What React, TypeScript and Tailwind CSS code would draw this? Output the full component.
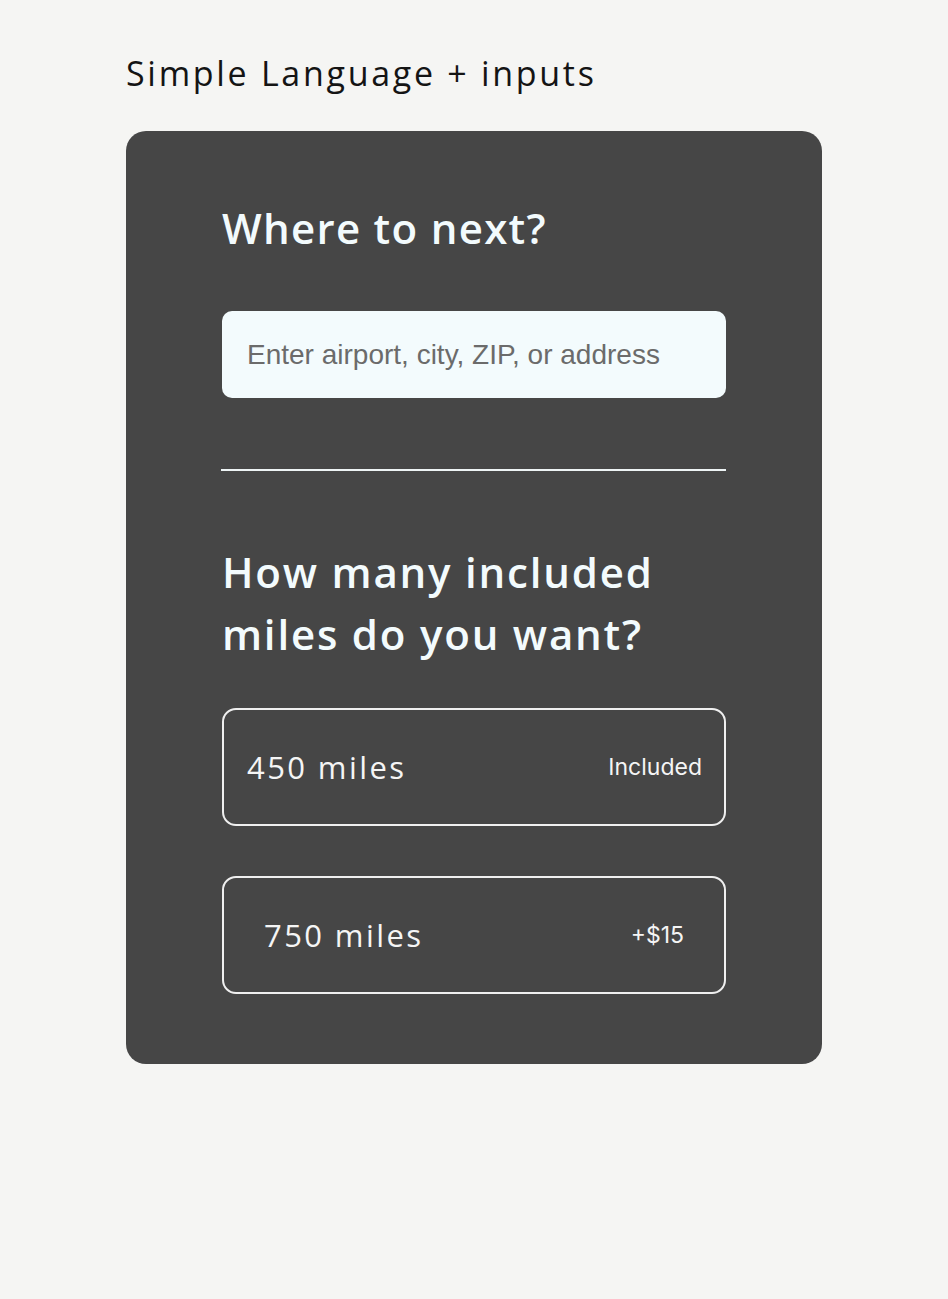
import React from 'react';

const heading = "font-['Open_Sans',sans-serif]";

interface MileOption {
  label: string;
  price: string;
  pad: string;
}

const options: MileOption[] = [
  { label: '450 miles', price: 'Included', pad: 'pl-[23px] pr-[22px]' },
  { label: '750 miles', price: '+$15', pad: 'pl-[40px] pr-[40px]' },
];

export default function App() {
  return (
    <div className="min-h-[1299px] w-full bg-[#f5f5f3] pl-[126px] pt-[53px]">
      <h1 className={`${heading} text-[34px] leading-[40px] font-normal tracking-[2.7px] text-[#141414]`}>
        Simple Language + inputs
      </h1>

      <div className="mt-[38px] w-[696px] rounded-[20px] bg-[#464646] px-[96px] pt-[73px] pb-[70px]">
        <h2 className={`${heading} text-[42px] leading-[48px] font-semibold tracking-[1.3px] text-[#f3fbfd]`}>
          Where to next?
        </h2>

        <div className="mt-[59px] flex h-[87px] items-center rounded-[10px] bg-[#f3fbfd] px-[25px]">
          <input
            className="w-full bg-transparent font-['Liberation_Sans',Arial,sans-serif] text-[28px] text-[#222] outline-none placeholder:text-[#6b6b6b]"
            placeholder="Enter airport, city, ZIP, or address"
          />
        </div>

        <div className="mt-[71px] -ml-px h-[2px] w-[505px] bg-[#eef4f5]" />

        <h2 className={`${heading} mt-[70px] text-[42px] leading-[62px] font-semibold tracking-[1.8px] text-[#f3fbfd]`}>
          How many included
          <br />
          miles do you want?
        </h2>

        <div className="mt-[43px] flex flex-col gap-[50px]">
          {options.map((opt) => (
            <button
              key={opt.label}
              className={`flex h-[118px] items-center justify-between rounded-[14px] border-2 border-[#efefef] ${opt.pad} text-[#f5f5f5]`}
            >
              <span className={`${heading} text-[31px] font-normal tracking-[2.4px]`}>{opt.label}</span>
              <span className="font-['Inter',sans-serif] text-[23px] font-normal">{opt.price}</span>
            </button>
          ))}
        </div>
      </div>
    </div>
  );
}
